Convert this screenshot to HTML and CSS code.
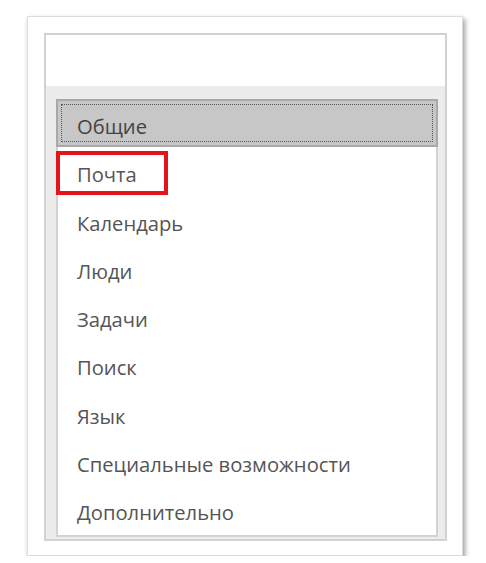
FILE: index.html
```html
<!DOCTYPE html>
<html lang="ru">
<head>
  <meta charset="UTF-8" />
  <meta name="viewport" content="width=device-width, initial-scale=1.0"/>
  <title>Параметры</title>
  <link rel="stylesheet" href="styles.css">
</head>
<body>
  <div class="window">
    <div class="panel">
      <div class="panel-top"></div>
      <div class="panel-body">
        <ul class="nav">
          <li class="nav-item selected"><span class="focus">Общие</span></li>
          <li class="nav-item marked">Почта</li>
          <li class="nav-item">Календарь</li>
          <li class="nav-item">Люди</li>
          <li class="nav-item">Задачи</li>
          <li class="nav-item">Поиск</li>
          <li class="nav-item">Язык</li>
          <li class="nav-item">Специальные возможности</li>
          <li class="nav-item">Дополнительно</li>
        </ul>
      </div>
    </div>
  </div>
</body>
</html>
```

FILE: styles.css
```css
:root {
  --text: #555;
  --line: #d2d2d2;
  --band: #ececec;
  --selected: #c7c7c7;
  --red: #e3141c;
}

body {
  margin: 0;
  background: #fff;
  font-family: "Open Sans", "Noto Sans", sans-serif;
  color: var(--text);
}

.window {
  box-sizing: border-box;
  width: 436px;
  height: 540px;
  margin: 16px 0 0 27px;
  padding: 16px 15px 14px 16px;
  background: #fff;
  border: 1px solid #dcdcdc;
  box-shadow: 2px 3px 5px rgba(0, 0, 0, 0.4);
}

.panel {
  box-sizing: border-box;
  height: 100%;
  border: 2px solid var(--line);
  display: flex;
  flex-direction: column;
}

.panel-top {
  height: 51px;
  background: #fff;
}

.panel-body {
  flex: 1;
  background: var(--band);
  padding: 13px 7px 2px 10px;
  display: flex;
}

.nav {
  flex: 1;
  list-style: none;
  margin: 0;
  padding: 0;
  background: #fff;
  border: 2px solid var(--line);
  border-top: none;
}

.nav-item {
  position: relative;
  box-sizing: border-box;
  height: 48.25px;
  padding: 6px 0 0 19px;
  line-height: 42px;
  font-size: 20.2px;
  white-space: nowrap;
}

.selected {
  margin: 0 -2px;
  padding: 3px;
  background: var(--selected);
  border: 2px solid #a9a9a9;
}

.selected .focus {
  display: block;
  box-sizing: border-box;
  height: 100%;
  padding: 4px 0 0 15px;
  line-height: 34px;
  border: 1px dotted #555;
  color: #444;
}

.marked::after {
  content: "";
  position: absolute;
  left: -2px;
  top: 4px;
  width: 112px;
  height: 44px;
  box-sizing: border-box;
  border: 4px solid var(--red);
}
```
